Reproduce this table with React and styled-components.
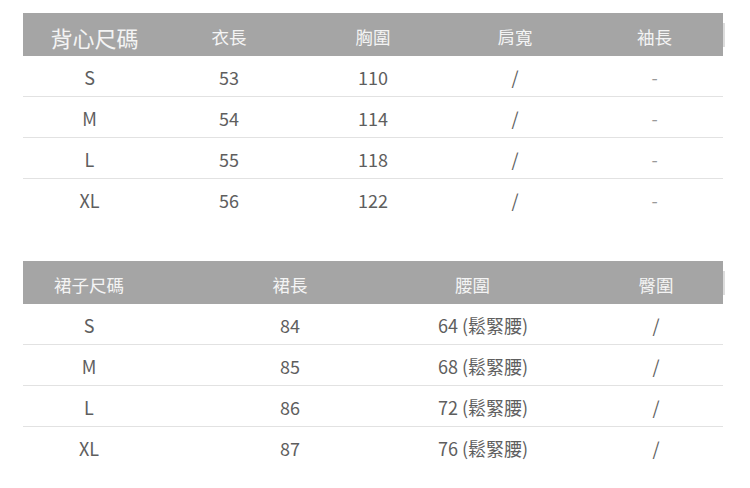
import styled, { createGlobalStyle } from "styled-components"

const GlobalStyle = createGlobalStyle`
    html, body {
        margin: 0;
        padding: 0;
        background: #fff;
    }
    body {
        font-family: "Noto Sans CJK TC", "Noto Sans", sans-serif;
    }
`

const vest = {
    title: '背心尺碼',
    cols: '133px 146px 142px 142px 1fr',
    heads: ['衣長', '胸圍', '肩寬', '袖長'],
    rows: [
        ['S', '53', '110', '/', '-'],
        ['M', '54', '114', '/', '-'],
        ['L', '55', '118', '/', '-'],
        ['XL', '56', '122', '/', '-'],
    ],
}

const skirt = {
    title: '裙子尺碼',
    cols: '132px 270px 164px 1fr',
    heads: ['裙長', '腰圍', '臀圍'],
    rows: [
        ['S', '84', '64 (鬆緊腰)', '/'],
        ['M', '85', '68 (鬆緊腰)', '/'],
        ['L', '86', '72 (鬆緊腰)', '/'],
        ['XL', '87', '76 (鬆緊腰)', '/'],
    ],
}

function SizeTable ({ data, big, leftCol }) {
    return (
        <Table>
            <HeadWrap>
                <Head $cols={data.cols}>
                    <HeadCell $big={big}>{data.title}</HeadCell>
                    {data.heads.map((h, i) => (
                        <HeadCell key={h} $left={leftCol === i + 1 ? 30 : 0}>{h}</HeadCell>
                    ))}
                </Head>
                <EdgeMark />
            </HeadWrap>
            {data.rows.map((row, r) => (
                <Row key={r} $cols={data.cols} $last={r === data.rows.length - 1}>
                    {row.map((v, i) => (
                        <Cell key={i} $left={leftCol === i ? 13 : 0} $soft={v === '-'}>{v}</Cell>
                    ))}
                </Row>
            ))}
        </Table>
    )
}

export default function App () {
    return <>
        <GlobalStyle />
        <Page>
            <SizeTable data={vest} big />
            <SizeTable data={skirt} leftCol={2} />
        </Page>
    </>
}

const Page = styled.main`
    display: flex;
    flex-direction: column;
    gap: 41px;
    padding: 13px 0 0 23px;
    width: 700px;
`

const Table = styled.section`
    display: flex;
    flex-direction: column;
`

const HeadWrap = styled.div`
    display: flex;
    align-items: center;
    width: 702px;
`

const Head = styled.div`
    display: grid;
    grid-template-columns: ${(p) => p.$cols};
    align-items: center;
    width: 700px;
    height: 43px;
    background-color: #a5a5a5;
`

const EdgeMark = styled.span`
    width: 2px;
    height: 24px;
    background-color: #dcdcdc;
`

const HeadCell = styled.div`
    color: #f4f4f4;
    font-size: ${(p) => p.$big ? '22px' : '17.5px'};
    line-height: 1;
    padding-top: 4px;
    text-align: ${(p) => p.$left ? 'left' : 'center'};
    padding-left: ${(p) => p.$big ? 10 : p.$left}px;
`

const Row = styled.div`
    display: grid;
    grid-template-columns: ${(p) => p.$cols};
    align-items: center;
    width: 700px;
    height: 41px;
    box-sizing: border-box;
    border-bottom: 1px solid ${(p) => p.$last ? 'transparent' : '#e2e2e2'};
`

const Cell = styled.div`
    color: ${(p) => p.$soft ? '#999' : '#5e5e5e'};
    font-size: 18px;
    line-height: 1;
    padding-top: 2px;
    text-align: ${(p) => p.$left ? 'left' : 'center'};
    padding-left: ${(p) => p.$left}px;
`
